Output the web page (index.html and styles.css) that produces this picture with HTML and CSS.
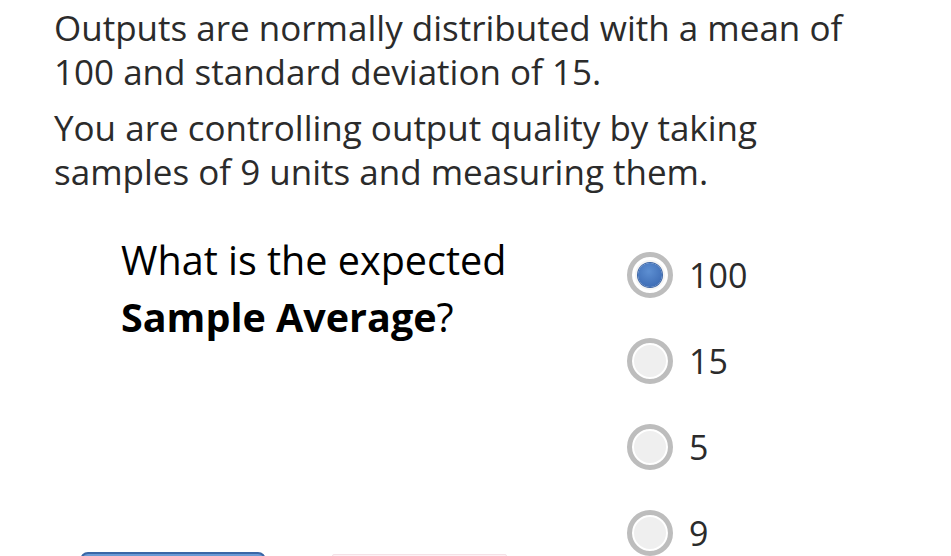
FILE: index.html
```html
<!DOCTYPE html>
<html lang="en">
<head>
<meta charset="utf-8">
<title>Sample Average</title>
<link rel="stylesheet" href="styles.css">
</head>
<body>
<main class="page">
  <p class="intro">Outputs are normally distributed with a mean of 100 and standard deviation of 15.</p>
  <p class="intro">You are controlling output quality by taking samples of 9 units and measuring them.</p>
  <section class="question">
    <div class="left">
      <div class="prompt">What is the expected <b>Sample Average</b>?</div>
      <div class="actions">
        <button class="btn primary" type="button"></button>
        <button class="btn secondary" type="button"></button>
      </div>
    </div>
    <ul class="options">
      <li class="option"><span class="radio checked"></span><span class="label">100</span></li>
      <li class="option"><span class="radio"></span><span class="label">15</span></li>
      <li class="option"><span class="radio"></span><span class="label">5</span></li>
      <li class="option"><span class="radio"></span><span class="label">9</span></li>
    </ul>
  </section>
</main>
</body>
</html>
```
FILE: styles.css
```css
html, body {
  margin: 0;
  padding: 0;
  background: #ffffff;
  overflow: hidden;
}

body {
  font-family: "Open Sans", Lato, sans-serif;
  font-size: 35px;
  color: #2b2b2b;
}

.page {
  padding: 6px 0 0 54px;
}

.intro {
  margin: 0;
  width: 800px;
  line-height: 44px;
}

.intro + .intro {
  margin-top: 12px;
}

.question {
  display: flex;
  margin-top: 38px;
  padding-left: 26px;
}

.left {
  width: 547px;
  display: flex;
  flex-direction: column;
}

.prompt {
  width: 420px;
  margin-left: 41px;
  font-size: 39.5px;
  line-height: 57px;
  color: #000000;
}

.prompt b {
  font-weight: 700;
}

.actions {
  display: flex;
  gap: 66px;
  margin-top: 206px;
}

.btn {
  height: 40px;
  border-radius: 8px;
  padding: 0;
}

.btn.primary {
  width: 186px;
  border: 2px solid #3a66a6;
  background: linear-gradient(#6b9bd6, #4a7fc2);
}

.btn.secondary {
  width: 175px;
  margin-top: 2px;
  border: 1px solid #f4e0e6;
  background: #fcf2f5;
  border-radius: 2px;
}

.options {
  list-style: none;
  margin: 0;
  padding: 0;
}

.option {
  height: 86px;
  display: flex;
  align-items: center;
  gap: 16px;
}

.radio {
  box-sizing: border-box;
  width: 46px;
  height: 46px;
  border-radius: 50%;
  border: 5px solid #bdbdbd;
  background: #efefef;
  box-shadow: inset 0 0 0 2px #ffffff;
  display: flex;
  align-items: center;
  justify-content: center;
}

.radio.checked {
  background: #f4f4f4;
  box-shadow: inset 0 0 0 3px #ffffff;
}

.radio.checked::after {
  content: "";
  width: 24px;
  height: 24px;
  border-radius: 50%;
  background: radial-gradient(circle at 45% 35%, #5d8fd2, #3563ad);
  box-shadow: 0 0 0 1px #3a63a3;
}

.label {
  font-size: 34px;
  color: #2b2b2b;
  line-height: 40px;
}
```
